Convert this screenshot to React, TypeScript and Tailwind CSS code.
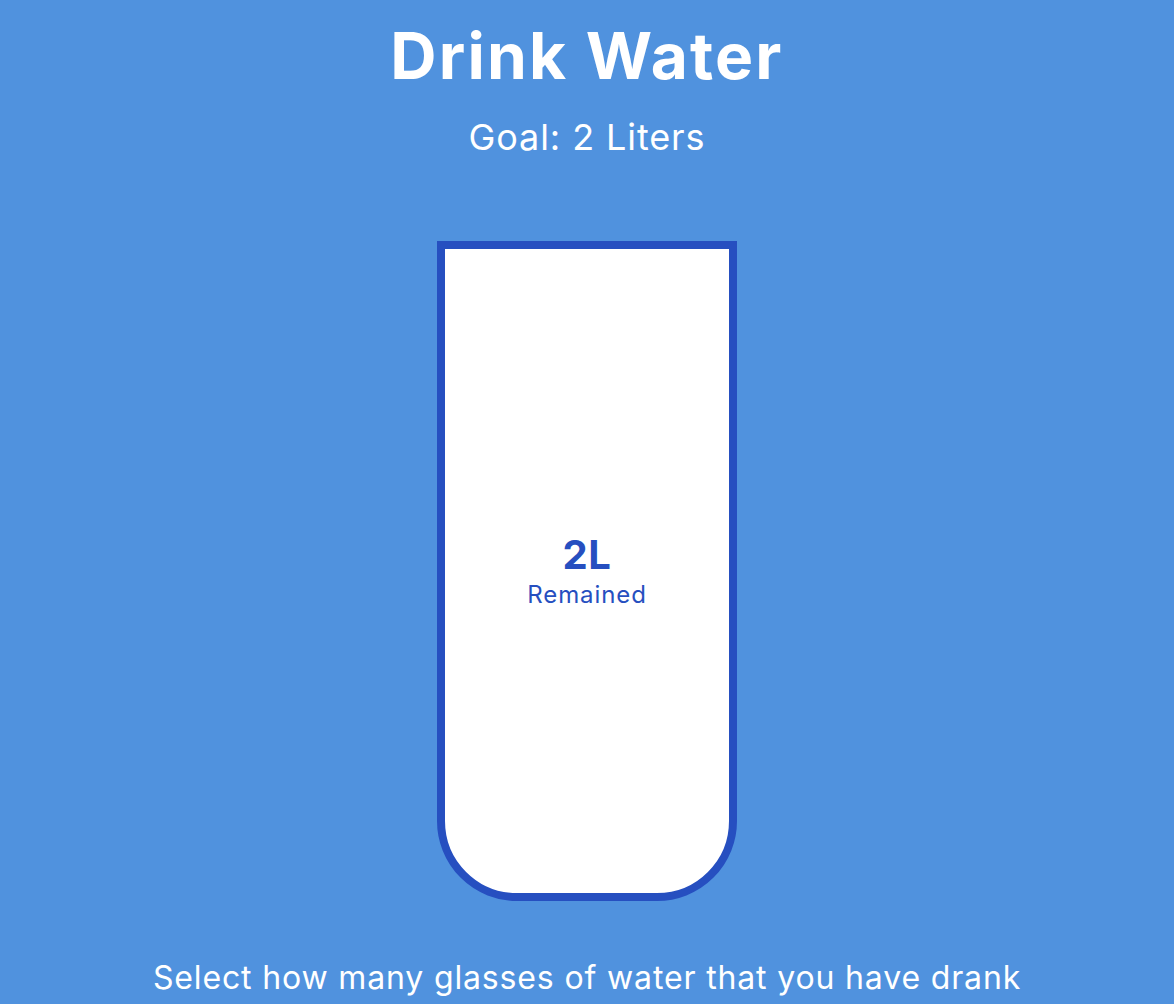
import React from 'react';

export default function App() {
  return (
    <div className="min-h-screen bg-[#5092de] flex flex-col items-center text-white font-['Inter',sans-serif] overflow-hidden">
      <h1 className="mt-[20px] text-[64px] font-bold leading-[72px] tracking-[2.2px]">Drink Water</h1>
      <h3 className="mt-[23px] text-[36px] font-normal leading-[44px] tracking-[0.9px]">Goal: 2 Liters</h3>

      {/* glass */}
      <div className="mt-[82px] w-[300px] h-[660px] bg-white border-[8px] border-[#264fc0] rounded-b-[80px] flex flex-col items-center justify-center text-[#264fc0]">
        <span className="text-[40px] font-bold leading-[44px] tracking-[0.5px]">2L</span>
        <small className="mt-[4px] text-[24px] leading-[28px] tracking-[0.9px]">Remained</small>
      </div>

      <p className="mt-[57px] text-[32px] leading-[40px] tracking-[0.85px]">Select how many glasses of water that you have drank</p>
    </div>
  );
}
